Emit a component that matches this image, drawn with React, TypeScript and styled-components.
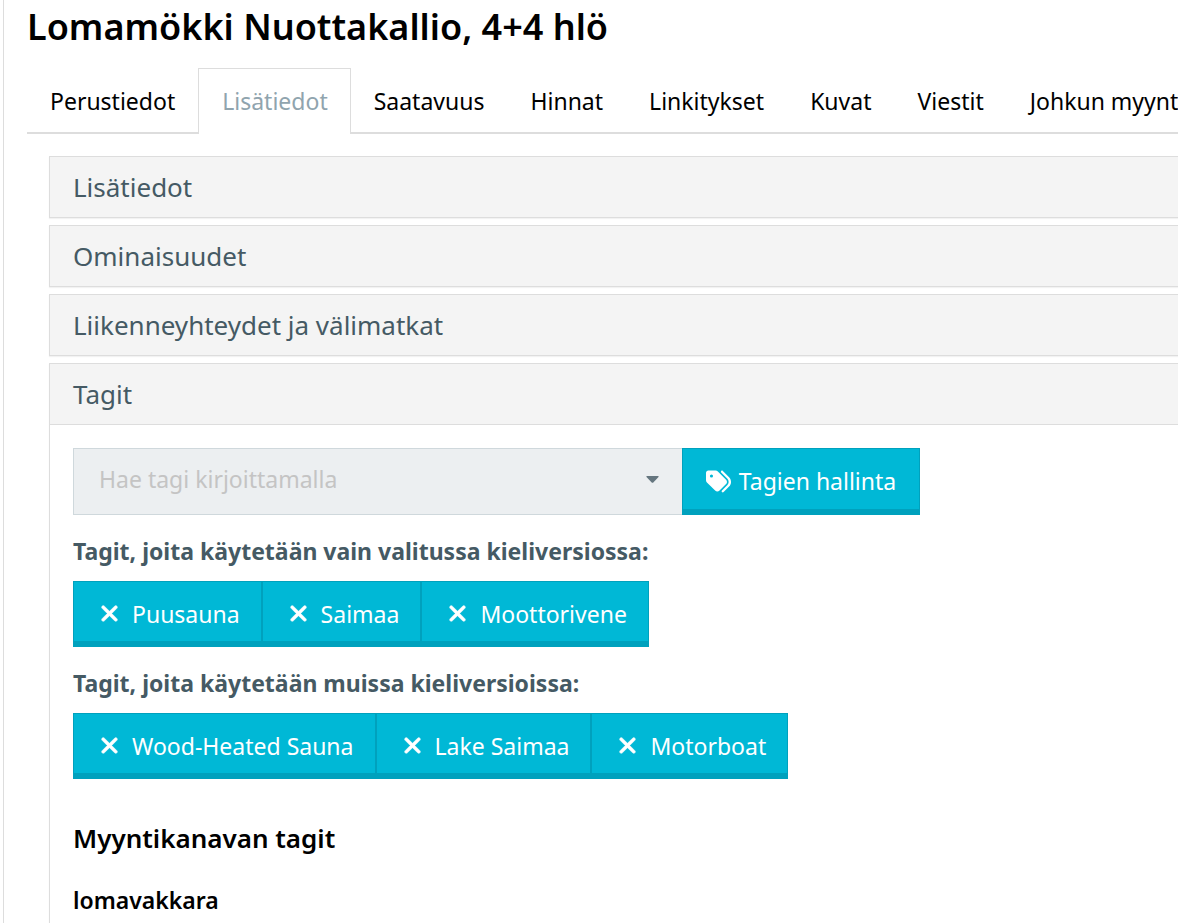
import React, { useState } from "react";
import styled, { createGlobalStyle } from "styled-components";
import { FaTags, FaXmark } from "react-icons/fa6";

const GlobalStyle = createGlobalStyle`
  *, *::before, *::after { box-sizing: border-box; }
  body {
    margin: 0;
    background: #fff;
    color: #455a64;
    font-family: "Noto Sans", "Open Sans", sans-serif;
    font-size: 23px;
    line-height: 32px;
    overflow-x: hidden;
  }
  button, input { font: inherit; }
`;

const Page = styled.main`
  min-height: 100vh;
  margin-left: 3px;
  padding-left: 23px;
  border-left: 1px solid #ddd;
  overflow: hidden;
`;

const Title = styled.h1`
  margin: 0 0 14px;
  color: #000;
  font-size: 36px;
  font-weight: 570;
  line-height: 54px;
  white-space: nowrap;
`;

const TabBar = styled.nav`
  display: flex;
  box-shadow: inset 0 -2px #ddd;
`;

const Tab = styled.a<{ $active?: boolean }>`
  flex: none;
  height: 66px;
  padding: 16px 22px 0 23px;
  border: 1px solid ${(p) => (p.$active ? "#ddd" : "transparent")};
  border-bottom: 0;
  border-left-width: ${(p) => (p.$active ? "1px" : "0")};
  background: ${(p) => (p.$active ? "#fff" : "transparent")};
  color: ${(p) => (p.$active ? "#90a4ae" : "#000")};
  text-decoration: none;
  white-space: nowrap;
`;

const Sections = styled.div`
  display: flex;
  flex-direction: column;
  gap: 7px;
  padding: 22px 0 0 22px;
`;

const Section = styled.section`
  border: 1px solid #ddd;
  border-right: 0;
  box-shadow: 0 1px 1px rgba(0, 0, 0, 0.05);
`;

const SectionHeading = styled.h2`
  margin: 0;
  font-weight: 400;
`;

const SectionToggle = styled.button`
  display: block;
  width: 100%;
  height: 60px;
  padding: 0 23px;
  border: 0;
  background: #f4f4f4;
  color: #455a64;
  font-size: 26px;
  font-weight: 400;
  line-height: 58px;
  text-align: left;
  cursor: pointer;
`;

const SectionBody = styled.div`
  padding: 23px;
  border-top: 1px solid #ddd;
`;

const SearchRow = styled.div`
  display: flex;
  max-width: 847px;
  height: 67px;
`;

const SearchBox = styled.div`
  display: flex;
  flex: 1;
  min-width: 0;
  border: 1px solid #cfd8dc;
  border-right: 0;
  background: #eceff1;
`;

const SearchInput = styled.input`
  flex: 1;
  min-width: 0;
  padding: 0 0 5px 25px;
  border: 0;
  outline: 0;
  background: transparent;
  color: #455a64;
  &::placeholder { color: #c4c4c4; opacity: 1; }
`;

const CaretButton = styled.button`
  display: flex;
  align-items: center;
  padding: 0 23px 5px;
  border: 0;
  background: transparent;
  color: #65767f;
`;

const ManageButton = styled.button`
  display: flex;
  flex: none;
  align-items: center;
  justify-content: center;
  gap: 8px;
  width: 238px;
  padding: 4px 0 0;
  border: 1px solid #00a1bd;
  border-bottom-width: 6px;
  background: #00b8d6;
  color: #fff;
  white-space: nowrap;
`;

const GroupLabel = styled.h3`
  margin: 20px 0 14px;
  font-size: 23px;
  font-weight: 670;
  line-height: 32px;
`;

const TagGroup = styled.div`
  display: flex;
`;

const TagButton = styled.button`
  display: flex;
  flex: none;
  align-items: center;
  gap: 11px;
  height: 66px;
  padding: 4px 21px 0 24px;
  border: 1px solid #00a1bd;
  border-bottom-width: 6px;
  background: #00b8d6;
  color: #fff;
  white-space: nowrap;
`;

const RemoveIcon = styled(FaXmark)`
  width: 23px;
  height: 25px;
  stroke: currentColor;
  stroke-width: 12px;
`;

const ChannelTitle = styled.h3`
  margin: 39px 0 26px;
  color: #000;
  font-size: 26px;
  font-weight: 620;
  line-height: 40px;
`;

const ChannelName = styled.h4`
  margin: 0;
  color: #000;
  font-size: 23px;
  font-weight: 620;
  line-height: 32px;
`;

const tabs = ["Perustiedot", "Lisätiedot", "Saatavuus", "Hinnat", "Linkitykset", "Kuvat", "Viestit", "Johkun myyntikanavat"];
const closedSections = ["Lisätiedot", "Ominaisuudet", "Liikenneyhteydet ja välimatkat"];

function Tags({ initial }: { initial: string[] }) {
  const [tags, setTags] = useState(initial);
  return (
    <TagGroup>
      {tags.map((tag) => (
        <TagButton key={tag} type="button" onClick={() => setTags(tags.filter((t) => t !== tag))}>
          <RemoveIcon aria-hidden="true" />
          {tag}
        </TagButton>
      ))}
    </TagGroup>
  );
}

export default function App() {
  return (
    <>
      <GlobalStyle />
      <Page>
        <Title>Lomamökki Nuottakallio, 4+4 hlö</Title>
        <TabBar>
          {tabs.map((tab) => (
            <Tab key={tab} href="#" $active={tab === "Lisätiedot"}>{tab}</Tab>
          ))}
        </TabBar>
        <Sections>
          {closedSections.map((name) => (
            <Section key={name}>
              <SectionHeading>
                <SectionToggle type="button" aria-expanded="false">{name}</SectionToggle>
              </SectionHeading>
            </Section>
          ))}
          <Section>
            <SectionHeading>
              <SectionToggle type="button" aria-expanded="true">Tagit</SectionToggle>
            </SectionHeading>
            <SectionBody>
              <SearchRow>
                <SearchBox>
                  <SearchInput type="text" placeholder="Hae tagi kirjoittamalla" aria-label="Hae tagi" />
                  <CaretButton type="button" aria-label="Avaa">
                    <svg width="13" height="7" viewBox="0 0 13 7" aria-hidden="true">
                      <path d="M1 0h11q1.200 0 .5 1L7.300 6.400q-.8.800-1.600 0L.5 1Q-.2 0 1 0z" fill="currentColor" />
                    </svg>
                  </CaretButton>
                </SearchBox>
                <ManageButton type="button">
                  <FaTags size={25} aria-hidden="true" />
                  Tagien hallinta
                </ManageButton>
              </SearchRow>
              <GroupLabel>Tagit, joita käytetään vain valitussa kieliversiossa:</GroupLabel>
              <Tags initial={["Puusauna", "Saimaa", "Moottorivene"]} />
              <GroupLabel>Tagit, joita käytetään muissa kieliversioissa:</GroupLabel>
              <Tags initial={["Wood-Heated Sauna", "Lake Saimaa", "Motorboat"]} />
              <ChannelTitle>Myyntikanavan tagit</ChannelTitle>
              <ChannelName>lomavakkara</ChannelName>
            </SectionBody>
          </Section>
        </Sections>
      </Page>
    </>
  );
}
